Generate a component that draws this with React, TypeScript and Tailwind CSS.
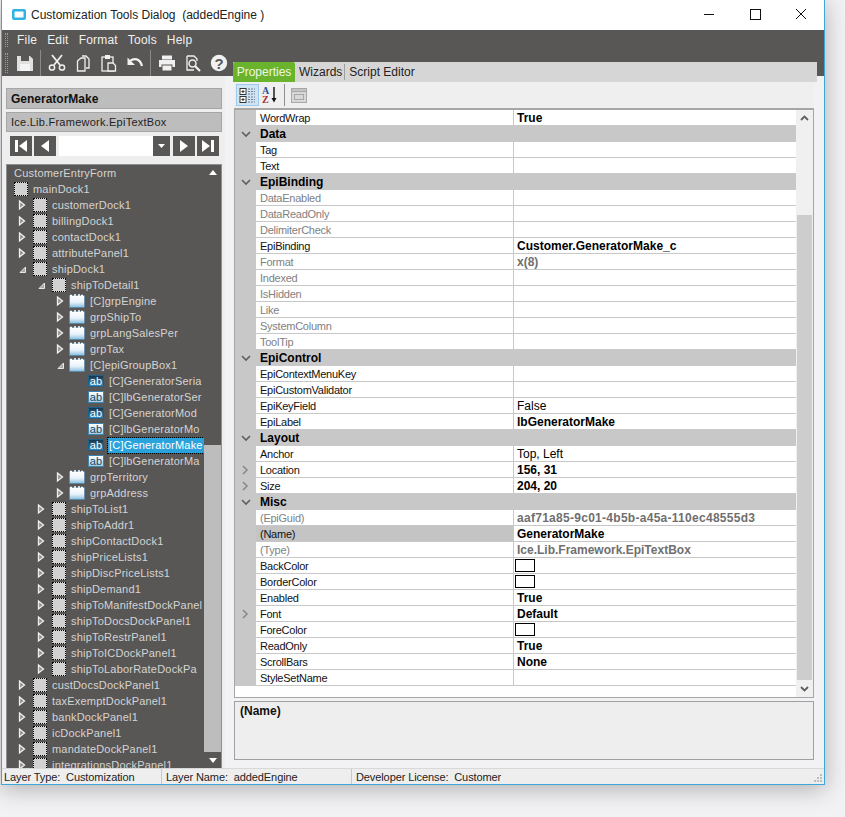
import React from "react";

const F = "font-['Liberation_Sans',Arial,sans-serif]";

type TreeKind = "dock" | "group" | "ab" | "abDark";
type Node = { t: string; d: number; k?: TreeKind; e?: "c" | "o"; sel?: boolean };

const tree: Node[] = [
  { t: "mainDock1", d: 0, k: "dock" },
  { t: "customerDock1", d: 1, k: "dock", e: "c" },
  { t: "billingDock1", d: 1, k: "dock", e: "c" },
  { t: "contactDock1", d: 1, k: "dock", e: "c" },
  { t: "attributePanel1", d: 1, k: "dock", e: "c" },
  { t: "shipDock1", d: 1, k: "dock", e: "o" },
  { t: "shipToDetail1", d: 2, k: "dock", e: "o" },
  { t: "[C]grpEngine", d: 3, k: "group", e: "c" },
  { t: "grpShipTo", d: 3, k: "group", e: "c" },
  { t: "grpLangSalesPer", d: 3, k: "group", e: "c" },
  { t: "grpTax", d: 3, k: "group", e: "c" },
  { t: "[C]epiGroupBox1", d: 3, k: "group", e: "o" },
  { t: "[C]GeneratorSeria", d: 4, k: "abDark" },
  { t: "[C]lbGeneratorSer", d: 4, k: "ab" },
  { t: "[C]GeneratorMod", d: 4, k: "abDark" },
  { t: "[C]lbGeneratorMo", d: 4, k: "ab" },
  { t: "[C]GeneratorMake", d: 4, k: "abDark", sel: true },
  { t: "[C]lbGeneratorMa", d: 4, k: "ab" },
  { t: "grpTerritory", d: 3, k: "group", e: "c" },
  { t: "grpAddress", d: 3, k: "group", e: "c" },
  { t: "shipToList1", d: 2, k: "dock", e: "c" },
  { t: "shipToAddr1", d: 2, k: "dock", e: "c" },
  { t: "shipContactDock1", d: 2, k: "dock", e: "c" },
  { t: "shipPriceLists1", d: 2, k: "dock", e: "c" },
  { t: "shipDiscPriceLists1", d: 2, k: "dock", e: "c" },
  { t: "shipDemand1", d: 2, k: "dock", e: "c" },
  { t: "shipToManifestDockPanel", d: 2, k: "dock", e: "c" },
  { t: "shipToDocsDockPanel1", d: 2, k: "dock", e: "c" },
  { t: "shipToRestrPanel1", d: 2, k: "dock", e: "c" },
  { t: "shipToICDockPanel1", d: 2, k: "dock", e: "c" },
  { t: "shipToLaborRateDockPa", d: 2, k: "dock", e: "c" },
  { t: "custDocsDockPanel1", d: 1, k: "dock", e: "c" },
  { t: "taxExemptDockPanel1", d: 1, k: "dock", e: "c" },
  { t: "bankDockPanel1", d: 1, k: "dock", e: "c" },
  { t: "icDockPanel1", d: 1, k: "dock", e: "c" },
  { t: "mandateDockPanel1", d: 1, k: "dock", e: "c" },
  { t: "integrationsDockPanel1", d: 1, k: "dock", e: "c" },
];

const depthPad = ["pl-[0px]", "pl-[2px]", "pl-[21px]", "pl-[40px]", "pl-[59px]"];

function Expander({ e }: { e?: "c" | "o" }) {
  if (!e) return <span className="w-[14px] shrink-0" />;
  return e === "c" ? (
    <svg width="14" height="12" viewBox="0 0 14 12" className="shrink-0">
      <path d="M3.5 2 L8.5 6 L3.5 10 Z" fill="#8f8f8f" stroke="#f0f0f0" strokeWidth="1.3" />
    </svg>
  ) : (
    <svg width="14" height="12" viewBox="0 0 14 12" className="shrink-0">
      <path d="M9.5 4 V9.5 H4 Z" fill="#a8a8a8" stroke="#e8e8e8" strokeWidth="1" />
    </svg>
  );
}

function TreeIcon({ k }: { k?: TreeKind }) {
  if (k === "dock")
    return <span className="w-[14px] h-[14px] shrink-0 bg-[#d2d2d2] border border-dotted border-black" />;
  if (k === "group")
    return (
      <svg width="16" height="14" viewBox="0 0 16 14" className="shrink-0">
        <defs>
          <linearGradient id="grp" x1="0" y1="0" x2="0" y2="1">
            <stop offset="0" stopColor="#ffffff" />
            <stop offset="0.55" stopColor="#eaf3fa" />
            <stop offset="1" stopColor="#86bde0" />
          </linearGradient>
        </defs>
        <rect x="0.5" y="1.5" width="15" height="12" fill="url(#grp)" stroke="#4c86ab" strokeWidth="0.6" />
        <path d="M1 1.5 h2 M5 1 h2 M9 1 h2 M12 1.5 h2" stroke="#ffffff" strokeWidth="1.4" />
      </svg>
    );
  const dark = k === "abDark";
  return (
    <span
      className={
        dark
          ? "w-[16px] h-[12px] shrink-0 flex items-center justify-center text-[11px] leading-none text-white border border-[#1e5f85] bg-gradient-to-b from-[#17384d] to-[#3f87b4]"
          : "w-[16px] h-[12px] shrink-0 flex items-center justify-center text-[11px] leading-none text-[#174a6b] border border-[#3b83b0] bg-gradient-to-b from-[#ffffff] to-[#a5d0ea]"
      }
    >
      ab
    </span>
  );
}

function NavBtn({ children }: { children: React.ReactNode }) {
  return <div className="w-[22px] h-[20px] bg-[#595755] flex items-center justify-center shrink-0">{children}</div>;
}

type Row =
  | { cat: string }
  | {
      n: string;
      v?: string;
      dim?: boolean;
      bold?: boolean;
      valDim?: boolean;
      exp?: boolean;
      swatch?: boolean;
      sel?: boolean;
      wide?: boolean;
    };

const rows: Row[] = [
  { n: "WordWrap", v: "True", bold: true },
  { cat: "Data" },
  { n: "Tag" },
  { n: "Text" },
  { cat: "EpiBinding" },
  { n: "DataEnabled", dim: true },
  { n: "DataReadOnly", dim: true },
  { n: "DelimiterCheck", dim: true },
  { n: "EpiBinding", v: "Customer.GeneratorMake_c", bold: true },
  { n: "Format", v: "x(8)", dim: true, bold: true, valDim: true },
  { n: "Indexed", dim: true },
  { n: "IsHidden", dim: true },
  { n: "Like", dim: true },
  { n: "SystemColumn", dim: true },
  { n: "ToolTip", dim: true },
  { cat: "EpiControl" },
  { n: "EpiContextMenuKey" },
  { n: "EpiCustomValidator" },
  { n: "EpiKeyField", v: "False" },
  { n: "EpiLabel", v: "lbGeneratorMake", bold: true },
  { cat: "Layout" },
  { n: "Anchor", v: "Top, Left" },
  { n: "Location", v: "156, 31", bold: true, exp: true },
  { n: "Size", v: "204, 20", bold: true, exp: true },
  { cat: "Misc" },
  { n: "(EpiGuid)", v: "aaf71a85-9c01-4b5b-a45a-110ec48555d3", dim: true, bold: true, valDim: true, wide: true },
  { n: "(Name)", v: "GeneratorMake", bold: true, sel: true },
  { n: "(Type)", v: "Ice.Lib.Framework.EpiTextBox", dim: true, bold: true, valDim: true },
  { n: "BackColor", swatch: true },
  { n: "BorderColor", swatch: true },
  { n: "Enabled", v: "True", bold: true },
  { n: "Font", v: "Default", bold: true, exp: true },
  { n: "ForeColor", swatch: true },
  { n: "ReadOnly", v: "True", bold: true },
  { n: "ScrollBars", v: "None", bold: true },
  { n: "StyleSetName" },
];

function GridRow({ r }: { r: Row }) {
  if ("cat" in r) {
    return (
      <div className="h-[16px] bg-[#c8c8c8] flex items-center">
        <span className="w-[21px] flex justify-center shrink-0">
          <svg width="10" height="7" viewBox="0 0 10 7">
            <path d="M1 1 L5 5 L9 1" fill="none" stroke="#5f5f5f" strokeWidth="1.6" />
          </svg>
        </span>
        <span className="pl-[4px] font-bold text-black">{r.cat}</span>
      </div>
    );
  }
  return (
    <div className="h-[16px] flex">
      <span className="w-[21px] shrink-0 bg-[#c8c8c8] flex items-center justify-center">
        {r.exp && (
          <svg width="7" height="10" viewBox="0 0 7 10">
            <path d="M1 1 L5 5 L1 9" fill="none" stroke="#8a8a8a" strokeWidth="1.6" />
          </svg>
        )}
      </span>
      <span
        className={
          "w-[258px] shrink-0 pl-[4px] border-b border-r border-[#c8c8c8] leading-[17px] text-[11px] tracking-[-0.25px] overflow-hidden " +
          (r.sel ? "bg-[#c4c4c4] " : "bg-white ") +
          (r.dim ? "text-[#7f7f7f]" : "text-[#111]")
        }
      >
        {r.n}
      </span>
      <span
        className={
          "flex-1 pl-[3px] border-b border-[#c8c8c8] bg-white leading-[17px] flex items-start overflow-hidden " +
          (r.bold ? "font-bold " : "") +
          (r.wide ? "tracking-[0.28px] " : "") +
          (r.valDim ? "text-[#6f6f6f]" : "text-black")
        }
      >
        {r.swatch ? <span className="mt-[1px] -ml-[2px] w-[20px] h-[13px] border border-black bg-white" /> : r.v}
      </span>
    </div>
  );
}

function Tool({ children }: { children: React.ReactNode }) {
  return (
    <svg width="18" height="18" viewBox="0 0 18 18" className="shrink-0" fill="none">
      {children}
    </svg>
  );
}

export default function App() {
  return (
    <div className={"w-[845px] h-[817px] bg-[#f2f2f4] overflow-hidden text-[12px] " + F}>
      <div className="ml-[1px] w-[824px] h-[785px] flex flex-col border-x border-b border-[#3ea6da] border-t-0 bg-[#f2f2f5] shadow-[0_4px_22px_rgba(0,0,0,0.28)]">
        {/* title bar */}
        <div className="h-[30px] shrink-0 bg-white flex items-center pl-[9px]">
          <svg width="16" height="14" viewBox="0 0 16 14" className="shrink-0">
            <rect x="1" y="1" width="14" height="11" rx="2" fill="#2fb3e6" />
            <rect x="3.5" y="3.5" width="9" height="6" rx="0.5" fill="#ffffff" />
          </svg>
          <span className="ml-[4px] text-[12px] text-[#222] whitespace-pre">Customization Tools Dialog  (addedEngine )</span>
          <div className="ml-auto flex items-center">
            <svg width="46" height="30" viewBox="0 0 46 30">
              <path d="M18 14.5 H28" stroke="#111" strokeWidth="1" />
            </svg>
            <svg width="46" height="30" viewBox="0 0 46 30">
              <rect x="18.5" y="9.5" width="10" height="10" fill="none" stroke="#111" strokeWidth="1" />
            </svg>
            <svg width="46" height="30" viewBox="0 0 46 30">
              <path d="M18 9 L28 19 M28 9 L18 19" stroke="#111" strokeWidth="1" />
            </svg>
          </div>
        </div>

        {/* menu + toolbar */}
        <div className="h-[46px] shrink-0 bg-[#595755] flex flex-col">
          <div className="h-[20px] flex items-center text-[#f0f0f0] text-[12px] tracking-[0.2px]">
            <span className="ml-[3px] w-[3px] h-[14px] border-x border-dotted border-[#9a9a9a]" />
            <span className="ml-[9px]">File</span>
            <span className="ml-[10px]">Edit</span>
            <span className="ml-[10px]">Format</span>
            <span className="ml-[10px]">Tools</span>
            <span className="ml-[10px]">Help</span>
          </div>
          <div className="h-[26px] flex items-center">
            <span className="ml-[3px] w-[3px] h-[20px] border-x border-dotted border-[#9a9a9a]" />
            <div className="ml-[8px]">
              <Tool>
                <path d="M1 2 H14 L17 5 V17 H1 Z" fill="#e0e0e0" />
                <rect x="5" y="2" width="8" height="5" fill="#595755" />
                <rect x="4" y="10" width="10" height="7" fill="#f4f4f4" />
              </Tool>
            </div>
            <span className="ml-[6px] w-px h-[26px] bg-[#8a8a8a]" />
            <div className="ml-[7px]">
              <Tool>
                <path d="M4 1 L12 11 M14 1 L6 11" stroke="#f0f0f0" strokeWidth="1.8" />
                <circle cx="4" cy="13.5" r="2.6" stroke="#f0f0f0" strokeWidth="1.5" />
                <circle cx="14" cy="13.5" r="2.6" stroke="#f0f0f0" strokeWidth="1.5" />
              </Tool>
            </div>
            <div className="ml-[8px]">
              <Tool>
                <path d="M8 2 H12 L15 5 V14 H12" stroke="#f0f0f0" strokeWidth="1.3" />
                <path d="M3.5 7 L7 4 H11 V17 H3.5 Z" stroke="#f0f0f0" strokeWidth="1.3" />
              </Tool>
            </div>
            <div className="ml-[8px]">
              <Tool>
                <rect x="2" y="3" width="11" height="14" stroke="#f0f0f0" strokeWidth="1.3" />
                <rect x="5" y="1" width="5" height="4" fill="#f0f0f0" />
                <path d="M8 9 H13 L15.5 11.5 V17 H8 Z" fill="#595755" stroke="#f0f0f0" strokeWidth="1.3" />
              </Tool>
            </div>
            <div className="ml-[8px]">
              <Tool>
                <path d="M4 7 C8 3.5 14 4.5 16 12" stroke="#f0f0f0" strokeWidth="2.2" />
                <path d="M1.5 3.5 V11 H9 Z" fill="#f0f0f0" />
              </Tool>
            </div>
            <span className="ml-[6px] w-px h-[26px] bg-[#8a8a8a]" />
            <div className="ml-[7px]">
              <Tool>
                <rect x="4" y="1.5" width="10" height="4" fill="#f0f0f0" />
                <rect x="1" y="6" width="16" height="7" fill="#f0f0f0" />
                <rect x="4" y="11" width="10" height="6" fill="#f0f0f0" stroke="#595755" strokeWidth="1" />
              </Tool>
            </div>
            <div className="ml-[8px]">
              <Tool>
                <path d="M3 2 H10 L13 5 V7 M10 16 H3 V2" stroke="#f0f0f0" strokeWidth="1.3" />
                <circle cx="8.5" cy="9.5" r="3.5" stroke="#f0f0f0" strokeWidth="1.5" />
                <path d="M11 12 L16 17" stroke="#f0f0f0" strokeWidth="2.2" />
              </Tool>
            </div>
            <div className="ml-[8px]">
              <Tool>
                <circle cx="9" cy="9" r="8.2" fill="#f0f0f0" />
                <text x="9" y="14.5" textAnchor="middle" fontSize="15" fontWeight="700" fill="#595755">?</text>
              </Tool>
            </div>
          </div>
        </div>

        {/* body */}
        <div className="flex flex-1 min-h-0">
          {/* left */}
          <div className="w-[223px] shrink-0 bg-[#eeeeee] pl-[4px] pr-[3px] pt-[12px] flex flex-col">
            <div className="h-[21px] bg-[#bdbdbd] border border-[#a6a6a6] pl-[4px] flex items-center font-bold text-[#111]">GeneratorMake</div>
            <div className="mt-[3px] h-[20px] bg-[#bdbdbd] border border-[#a6a6a6] pl-[4px] flex items-center text-[#222] text-[11px] tracking-[0.25px]">Ice.Lib.Framework.EpiTextBox</div>
            <div className="mt-[4px] flex items-center pl-[4px] h-[20px]">
              <NavBtn>
                <svg width="14" height="14" viewBox="0 0 14 14"><rect x="1" y="1" width="3" height="12" fill="#fff" /><path d="M13 1 V13 L5 7 Z" fill="#fff" /></svg>
              </NavBtn>
              <div className="ml-[2px]">
                <NavBtn>
                  <svg width="12" height="14" viewBox="0 0 12 14"><path d="M10 1 V13 L2 7 Z" fill="#fff" /></svg>
                </NavBtn>
              </div>
              <div className="ml-[3px] w-[94px] h-[20px] bg-white" />
              <div className="w-[17px] h-[20px] bg-[#595755] flex items-center justify-center">
                <svg width="7" height="4" viewBox="0 0 7 4"><path d="M0 0 H7 L3.5 4 Z" fill="#fff" /></svg>
              </div>
              <div className="ml-[3px]">
                <NavBtn>
                  <svg width="12" height="14" viewBox="0 0 12 14"><path d="M2 1 V13 L10 7 Z" fill="#fff" /></svg>
                </NavBtn>
              </div>
              <div className="ml-[2px]">
                <NavBtn>
                  <svg width="14" height="14" viewBox="0 0 14 14"><path d="M1 1 V13 L9 7 Z" fill="#fff" /><rect x="10" y="1" width="3" height="12" fill="#fff" /></svg>
                </NavBtn>
              </div>
            </div>

            <div className="mt-[8px] flex-1 min-h-0 bg-[#595755] border-t border-x border-[#8f8f8f] overflow-hidden flex text-[#d4d4d4] text-[11px] tracking-[0.2px]">
              <div className="flex-1 min-w-0 overflow-hidden pl-[7px]">
                <div className="h-[16px] leading-[16px]">CustomerEntryForm</div>
                <div>
                  {tree.map((n) => (
                    <div key={n.t} className={"h-[16px] flex items-center whitespace-nowrap " + depthPad[n.d]}>
                      {n.d > 0 ? <Expander e={n.e} /> : null}
                      <span className={"flex shrink-0 " + (n.d === 0 ? "" : n.k === "dock" ? "ml-[3px]" : "ml-[1px]")}>
                        <TreeIcon k={n.k} />
                      </span>
                      <span
                        className={
                          "ml-[4px] h-[15px] leading-[15px] px-[1px] " +
                          (n.sel ? "bg-[#2aa3dd] text-white outline-1 outline-dotted outline-black" : "")
                        }
                      >
                        {n.t}
                      </span>
                    </div>
                  ))}
                </div>
              </div>
              <div className="w-[17px] shrink-0 flex flex-col bg-[#595755]">
                <div className="h-[16px] flex items-center justify-center">
                  <svg width="8" height="5" viewBox="0 0 8 5"><path d="M0 5 H8 L4 0 Z" fill="#fff" /></svg>
                </div>
                <div className="h-[265px]" />
                <div className="h-[308px] bg-[#bdbdbd]" />
                <div className="h-[16px] flex items-center justify-center">
                  <svg width="8" height="5" viewBox="0 0 8 5"><path d="M0 0 H8 L4 5 Z" fill="#fff" /></svg>
                </div>
              </div>
            </div>
          </div>

          {/* right */}
          <div className="flex-1 min-w-0 -mt-[14px] pl-[8px] flex flex-col">
            <div className="h-[20px] shrink-0 mr-[7px] bg-[#d6d6d6] flex items-stretch text-[12px] text-[#222]">
              <span className="w-[62px] bg-[#6ab42d] text-[#eef7e2] flex items-center justify-center rounded-t-[2px]">Properties</span>
              <span className="pl-[4px] pr-[2px] flex items-center">Wizards</span>
              <span className="my-[2px] w-px bg-[#9e9e9e]" />
              <span className="pl-[4px] flex items-center">Script Editor</span>
            </div>
            <div className="h-[26px] shrink-0 ml-[1px] mr-[10px] bg-[#efefef] flex items-center">
              <div className="ml-[2px] w-[23px] h-[22px] bg-[#cfe4f5] border border-[#9ec9ea] flex items-center justify-center">
                <svg width="17" height="17" viewBox="0 0 17 17">
                  <rect x="1" y="1.5" width="6" height="6" fill="#fff" stroke="#333" />
                  <path d="M2.5 4.5 H5.5 M4 3 V6" stroke="#333" />
                  <rect x="1" y="9.5" width="6" height="6" fill="#fff" stroke="#333" />
                  <path d="M2.5 12.5 H5.5 M4 11 V14" stroke="#333" />
                  <path d="M9 2 H16 M9 4.5 H16 M9 7 H16 M9 10 H16 M9 12.5 H16 M9 15 H16" stroke="#6b7f8f" strokeWidth="1" strokeDasharray="2 1" />
                </svg>
              </div>
              <svg width="18" height="18" viewBox="0 0 18 18" className="ml-[2px]">
                <text x="1" y="8" fontSize="10" fontWeight="700" fill="#2c4d9a" fontFamily="Liberation Serif">A</text>
                <text x="1" y="17" fontSize="10" fontWeight="700" fill="#a33030" fontFamily="Liberation Serif">Z</text>
                <path d="M13 1 V15" stroke="#111" strokeWidth="1.4" />
                <path d="M10.5 12 H15.5 L13 16.5 Z" fill="#111" />
              </svg>
              <span className="ml-[5px] w-px h-[22px] bg-[#8f8f8f]" />
              <div className="ml-[6px] w-[16px] h-[15px] bg-[#d8d8d8] border border-[#a8a8a8] flex flex-col">
                <span className="h-[3px] bg-[#c4c4c4] border-b border-[#a8a8a8]" />
                <span className="mt-[2px] ml-[2px] w-[10px] h-[6px] border border-[#a8a8a8]" />
              </div>
            </div>

            <div className="h-[590px] shrink-0 ml-[1px] mr-[10px] border-t-2 border-x border-b border-[#a6a6a6] bg-white flex">
              <div className="flex-1 min-w-0 leading-[16px] text-[12px]">
                {rows.map((r, i) => (
                  <GridRow key={i} r={r} />
                ))}
              </div>
              <div className="w-[17px] shrink-0 bg-[#f0f0f0] flex flex-col">
                <div className="h-[16px] flex items-center justify-center">
                  <svg width="9" height="6" viewBox="0 0 9 6"><path d="M1 5 L4.5 1.5 L8 5" fill="none" stroke="#5f5f5f" strokeWidth="1.8" /></svg>
                </div>
                <div className="h-[89px]" />
                <div className="h-[465px] mx-[1px] bg-[#cdcdcd]" />
                <div className="flex-1 flex items-center justify-center">
                  <svg width="9" height="6" viewBox="0 0 9 6"><path d="M1 1 L4.5 4.5 L8 1" fill="none" stroke="#5f5f5f" strokeWidth="1.8" /></svg>
                </div>
              </div>
            </div>

            <div className="mt-[3px] h-[59px] shrink-0 ml-[1px] mr-[10px] border border-[#a0a0a0] bg-[#eeeeee] pl-[5px] pt-[1px] font-bold text-[#111] leading-[16px]">(Name)</div>
          </div>
        </div>

        {/* status */}
        <div className="h-[16px] shrink-0 bg-[#eeeeee] border-t border-[#d8d8d8] flex items-center text-[#222] text-[11px] tracking-[-0.1px] whitespace-pre leading-[14px] relative">
          <span className="w-[159px] pl-[2px]">Layer Type:  Customization</span>
          <span className="w-px h-full bg-[#c8c8c8]" />
          <span className="w-[189px] pl-[4px]">Layer Name:  addedEngine</span>
          <span className="w-px h-full bg-[#c8c8c8]" />
          <span className="pl-[4px]">Developer License:  Customer</span>
          <svg width="12" height="12" viewBox="0 0 12 12" className="absolute right-0 bottom-0">
            <path d="M8 2 h2 v2 h-2z M5 5 h2 v2 h-2z M8 5 h2 v2 h-2z M2 8 h2 v2 h-2z M5 8 h2 v2 h-2z M8 8 h2 v2 h-2z" fill="#bdbdbd" />
          </svg>
        </div>
      </div>
    </div>
  );
}
